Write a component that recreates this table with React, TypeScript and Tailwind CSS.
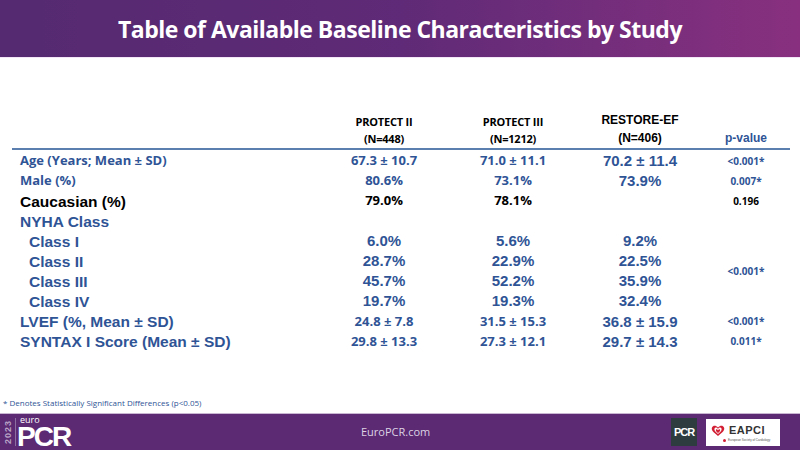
import React from "react";

const blue = "text-[#2f5496]";

type Row = {
  label: string;
  indent?: boolean;
  black?: boolean;
  calibri?: boolean;
  v: [string, string, string];
  small?: boolean;
  p?: string;
};

const rows: Row[] = [
  { label: "Age (Years; Mean ± SD)", calibri: true, v: ["67.3 ± 10.7", "71.0 ± 11.1", "70.2 ± 11.4"], small: true, p: "<0.001*" },
  { label: "Male (%)", calibri: true, v: ["80.6%", "73.1%", "73.9%"], small: true, p: "0.007*" },
  { label: "Caucasian (%)", black: true, v: ["79.0%", "78.1%", ""], small: true, p: "0.196" },
  { label: "NYHA Class", v: ["", "", ""] },
  { label: "Class I", indent: true, v: ["6.0%", "5.6%", "9.2%"] },
  { label: "Class II", indent: true, v: ["28.7%", "22.9%", "22.5%"] },
  { label: "Class III", indent: true, v: ["45.7%", "52.2%", "35.9%"] },
  { label: "Class IV", indent: true, v: ["19.7%", "19.3%", "32.4%"] },
  { label: "LVEF (%, Mean ± SD)", v: ["24.8 ± 7.8", "31.5 ± 15.3", "36.8 ± 15.9"], small: true, p: "<0.001*" },
  { label: "SYNTAX I Score (Mean ± SD)", v: ["29.8 ± 13.3", "27.3 ± 12.1", "29.7 ± 14.3"], small: true, p: "0.011*" },
];

const arial = "font-['Liberation_Sans',Arial,sans-serif]";
const calibri = "font-['Open_Sans',sans-serif]";

export default function App() {
  return (
    <div className="w-[800px] h-[450px] bg-white flex flex-col overflow-hidden">
      <div className="h-[58px] shrink-0 bg-gradient-to-r from-[#552a70] via-[#5f2a77] to-[#88307f] flex items-center justify-center border-b border-[#f3e6f6]">
        <h1 className={`${calibri} text-white font-bold text-[23px] tracking-[-0.5px] mt-[2px]`}>
          Table of Available Baseline Characteristics by Study
        </h1>
      </div>

      <div className="flex-1 pl-[12px] pr-[10px]">
        <div className="grid grid-cols-[308px_128px_130px_124px_88px] h-[92px] items-end border-b-2 border-[#5b7fae] pb-[1px]">
          <div />
          <div className={`${calibri} font-bold text-[11px] leading-[17px] text-black text-center tracking-[-0.2px]`}>
            PROTECT II
            <br />
            (N=448)
          </div>
          <div className={`${calibri} font-bold text-[11px] leading-[17px] text-black text-center tracking-[-0.2px]`}>
            PROTECT III
            <br />
            (N=1212)
          </div>
          <div className={`${arial} font-bold text-[12px] leading-[18px] text-black text-center`}>
            RESTORE-EF
            <br />
            (N=406)
          </div>
          <div className={`${arial} font-bold text-[12px] leading-[18px] ${blue} text-center`}>p-value</div>
        </div>

        <div className="grid grid-cols-[308px_128px_130px_124px_88px] auto-rows-[20.1px] pt-[1px]">
          {rows.map((r, i) => {
            const color = r.black ? "text-black" : blue;
            return (
              <React.Fragment key={r.label}>
                <div
                  className={`flex items-center font-bold ${color} ${r.calibri ? `${calibri} text-[13px]` : `${arial} text-[15.5px]`} ${r.indent ? "pl-[17px]" : "pl-[8px]"}`}
                >
                  {r.label}
                </div>
                {r.v.map((val, j) => (
                  <div
                    key={j}
                    className={`flex items-center justify-center font-bold ${color} ${
                      j === 2
                        ? `${arial} text-[15px]`
                        : r.small && j < 2
                        ? `${calibri} text-[13px]`
                        : `${arial} text-[15px]`
                    }`}
                  >
                    {val}
                  </div>
                ))}
                {r.p ? (
                  <div className={`flex items-center justify-center ${calibri} font-bold text-[10px] ${color}`}>{r.p}</div>
                ) : i === 3 ? (
                  <div />
                ) : i === 4 ? (
                  <div className={`row-span-4 flex items-center justify-center ${calibri} font-bold text-[10px] ${blue}`}>
                    &lt;0.001*
                  </div>
                ) : null}
              </React.Fragment>
            );
          })}
        </div>

        <div className={`${calibri} text-[8px] ${blue} mt-[45px] -ml-[9px]`}>
          * Denotes Statistically Significant Differences (p&lt;0.05)
        </div>
      </div>

      <div className="h-[37px] shrink-0 bg-[#5b2a73] flex items-center px-[3px] border-t border-[#c9b6d3]">
        <div className="flex items-center w-[320px]">
          <div
            className={`${arial} font-bold text-[9px] text-[#b9a4c6] [writing-mode:vertical-rl] rotate-180 tracking-[1px] leading-[10px] h-[30px] text-center`}
          >
            2023
          </div>
          <div className="ml-[2px] w-[1px] h-[28px] bg-[#8c6fa0]" />
          <div className="ml-[1px] flex flex-col">
            <span className={`${calibri} text-white text-[9px] leading-[9px] ml-[3px]`}>euro</span>
            <span className={`${arial} text-white font-bold text-[28px] leading-[26px] tracking-[-2px] pr-[2px]`}>PCR</span>
          </div>
        </div>
        <div className={`flex-1 ${calibri} text-[#ddd3e4] text-[11px] pl-[38px]`}>EuroPCR.com</div>
        <div className="flex items-center gap-[9px] mr-[17px]">
          <div className={`w-[26px] h-[28px] bg-[#2e3b3f] flex items-center justify-center ${arial} text-white font-bold text-[11px] tracking-[-1px]`}>
            PCR
          </div>
          <div className="w-[74px] h-[27px] bg-white flex flex-col justify-center px-[5px]">
            <div className="flex items-center gap-[4px]">
              <svg width="14" height="13" viewBox="0 0 14 13">
                <path d="M7 12 C2 8 0 6 1 3.5 C2 1 5 1 7 3.5 C9 1 12 1 13 3.5 C14 6 12 8 7 12 Z" fill="#d21f34" />
                <path d="M7 10 C4 7.5 3 6 3.5 4.5 C4.3 3 6 3.5 7 5 C8 3.5 9.7 3 10.5 4.5 C11 6 10 7.5 7 10 Z" fill="#fff" />
                <path d="M7 9 C5 7.5 4.5 6.5 5 5.5 C5.6 4.8 6.5 5.5 7 6.2 C7.5 5.5 8.4 4.8 9 5.5 C9.5 6.5 9 7.5 7 9 Z" fill="#d21f34" />
              </svg>
              <span className={`${arial} font-bold text-[11px] text-[#333] tracking-[0.5px]`}>EAPCI</span>
            </div>
            <div className="flex items-center gap-[2px] ml-[12px] mt-[1px]">
              <span className="w-[3px] h-[3px] bg-[#d21f34] rounded-full" />
              <span className={`${arial} text-[3px] text-[#555] leading-none`}>European Society of Cardiology</span>
            </div>
          </div>
        </div>
      </div>
    </div>
  );
}
